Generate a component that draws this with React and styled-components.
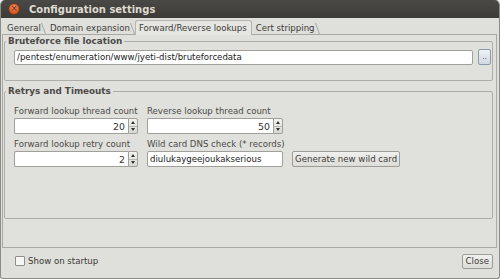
import React, { useState } from 'react';
import styled, { createGlobalStyle } from 'styled-components';

const GlobalStyle = createGlobalStyle`
  html, body {
    margin: 0;
    padding: 0;
    background: #f2f1f0;
  }
  * {
    box-sizing: border-box;
  }
`

const Window = styled.div`
  width: 500px;
  height: 279px;
  display: flex;
  flex-direction: column;
  background: #dfdfdb;
  border-radius: 5px 5px 3px 3px;
  border: 1px solid #8d8b85;
  border-top: none;
  overflow: hidden;
  font-family: "DejaVu Sans", "Liberation Sans", sans-serif;
  font-size: 8.6px;
  color: #3c3b37;
`

const TitleBar = styled.div`
  height: 18px;
  flex: none;
  display: flex;
  align-items: center;
  gap: 9px;
  padding-left: 7px;
  background: linear-gradient(#4a4945, #3c3b37);
  color: #dfdbd2;
  font-weight: bold;
  font-size: 10px;
`

const CloseDot = styled.span`
  width: 12px;
  height: 12px;
  border-radius: 50%;
  background: radial-gradient(circle at 50% 35%, #f58f5d, #d9531d 70%);
  border: 1px solid #6b3a25;
  display: flex;
  align-items: center;
  justify-content: center;
  color: #4a2a1c;
  font-size: 8px;
  font-weight: normal;
  line-height: 1;
`

const Body = styled.div`
  flex: 1;
  display: flex;
  flex-direction: column;
  padding: 2px 2px 0 1px;
`

const TabRow = styled.div`
  display: flex;
  align-items: flex-end;
  height: 14px;
  padding-left: 1px;
`

const Tab = styled.div`
  position: relative;
  height: ${p => (p.$active ? '15px' : '13px')};
  padding: 0 4px 0 3px;
  display: flex;
  align-items: center;
  background: ${p => (p.$active ? '#e6e6e2' : 'transparent')};
  border: 1px solid ${p => (p.$active ? '#b4b3ae' : 'transparent')};
  border-bottom: none;
  border-radius: 3px 3px 0 0;
  margin-bottom: ${p => (p.$active ? '-1px' : '0')};
  z-index: ${p => (p.$active ? 2 : 1)};
  white-space: nowrap;
  color: #3c3b37;

  &::after {
    content: '';
    position: absolute;
    right: 1px;
    bottom: 0;
    width: 1px;
    height: 11px;
    background: #a9a8a3;
    transform: skewX(20deg);
    display: ${p => (p.$active ? 'none' : 'block')};
  }
`

const Pane = styled.div`
  flex: 1;
  display: flex;
  flex-direction: column;
  gap: 5px;
  border: 1px solid #a9a8a3;
  background: #e0e0dc;
  padding: 1px 3px 0 1px;
`

const Group = styled.fieldset`
  margin: 0;
  padding: 0;
  border: 1px solid #aeada8;
  border-radius: 2px;
  min-width: 0;
`

const Legend = styled.legend`
  padding: 0 2px;
  margin-left: 1px;
  font-weight: bold;
  font-size: 8.8px;
  color: #4c4b47;
  line-height: 11px;
`

const FileRow = styled.div`
  display: flex;
  align-items: center;
  gap: 5px;
  padding: 2px 1px 15px 9px;
`

const TextInput = styled.input`
  height: ${p => p.$h || 15}px;
  flex: ${p => (p.$grow ? 1 : 'none')};
  min-width: 0;
  border: 1px solid #a09f9a;
  border-radius: 2px;
  background: #ffffff;
  font-family: inherit;
  font-size: 8.6px;
  color: #222;
  padding: 0 2px;
  outline: none;
  margin-bottom: ${p => p.$mb || 0}px;
`

const SmallButton = styled.button`
  width: 13px;
  height: 16px;
  padding: 0;
  border: 1px solid #8f9aa8;
  border-radius: 2px;
  background: linear-gradient(#eef1f5, #d3d9e1);
  font-family: inherit;
  font-size: 7px;
  color: #333;
  line-height: 1;
`

const Grid = styled.div`
  display: grid;
  grid-template-columns: 124px 136px auto;
  column-gap: 9px;
  align-items: center;
  padding: 8px 0 47px 9px;
`

const Label = styled.div`
  height: 13px;
  line-height: 13px;
  white-space: nowrap;
  color: #4c4b47;
  grid-column: ${p => p.$col || 'auto'};
`

const SpinWrap = styled.div`
  display: flex;
  height: 16px;
  margin-bottom: 4px;
`

const SpinField = styled.input`
  flex: 1;
  min-width: 0;
  height: 16px;
  border: 1px solid #a09f9a;
  border-right: none;
  border-radius: 2px 0 0 2px;
  background: #fff;
  text-align: right;
  font-family: inherit;
  font-size: 9.4px;
  color: #333;
  padding: 0 3px;
  outline: none;
`

const SpinArrows = styled.div`
  width: 10px;
  display: flex;
  flex-direction: column;
  border: 1px solid #a09f9a;
  border-radius: 0 2px 2px 0;
  background: linear-gradient(#f2f2f0, #d8d8d4);
`

const Arrow = styled.div`
  flex: 1;
  display: flex;
  align-items: center;
  justify-content: center;
  border-top: ${p => (p.$down ? '1px solid #b8b7b2' : 'none')};
  &::after {
    content: '';
    border-left: 2.5px solid transparent;
    border-right: 2.5px solid transparent;
    ${p => (p.$down ? 'border-top: 3px solid #333;' : 'border-bottom: 3px solid #333;')}
  }
`

const Button = styled.button`
  height: ${p => p.$h || 16}px;
  padding: 0 ${p => p.$px || 2}px;
  border: 1px solid #9d9c97;
  border-radius: 2px;
  background: linear-gradient(#f0f0ee, #dcdcd8);
  font-family: inherit;
  font-size: 8.6px;
  color: #3c3b37;
  white-space: nowrap;
  justify-self: start;
  margin-bottom: ${p => p.$mb || 0}px;
`

const Footer = styled.div`
  height: 30px;
  flex: none;
  display: flex;
  align-items: center;
  justify-content: space-between;
  padding: 0 6px 4px 14px;
`

const CheckLabel = styled.label`
  display: flex;
  align-items: center;
  gap: 3px;
  color: #3c3b37;
`

const Box = styled.span`
  width: 10px;
  height: 10px;
  border: 1px solid #8e8d88;
  border-radius: 1px;
  background: #f6f6f4;
`

function SpinBox({ value }) {
  return (
    <SpinWrap>
      <SpinField readOnly value={value} />
      <SpinArrows>
        <Arrow />
        <Arrow $down />
      </SpinArrows>
    </SpinWrap>
  );
}

const tabs = ['General', 'Domain expansion', 'Forward/Reverse lookups', 'Cert stripping'];

const App = () => {
  const [active] = useState(2);

  return (
    <>
      <GlobalStyle />
      <Window>
        <TitleBar>
          <CloseDot>×</CloseDot>
          <span>Configuration settings</span>
        </TitleBar>
        <Body>
          <TabRow>
            {tabs.map((t, i) => (
              <Tab key={t} $active={i === active}>{t}</Tab>
            ))}
          </TabRow>
          <Pane>
            <Group>
              <Legend>Bruteforce file location</Legend>
              <FileRow>
                <TextInput $grow readOnly value="/pentest/enumeration/www/jyeti-dist/bruteforcedata" />
                <SmallButton>..</SmallButton>
              </FileRow>
            </Group>
            <Group>
              <Legend>Retrys and Timeouts</Legend>
              <Grid>
                <Label>Forward lookup thread count</Label>
                <Label $col="2 / span 2">Reverse lookup thread count</Label>
                <SpinBox value="20" />
                <SpinBox value="50" />
                <div />
                <Label>Forward lookup retry count</Label>
                <Label $col="2 / span 2">Wild card DNS check (* records)</Label>
                <SpinBox value="2" />
                <TextInput $h={16} $mb={4} readOnly value="diulukaygeejoukakserious" />
                <Button $mb={4}>Generate new wild card</Button>
              </Grid>
            </Group>
          </Pane>
        </Body>
        <Footer>
          <CheckLabel>
            <Box />
            Show on startup
          </CheckLabel>
          <Button $h={15} $px={3}>Close</Button>
        </Footer>
      </Window>
    </>
  );
}

export default App;
